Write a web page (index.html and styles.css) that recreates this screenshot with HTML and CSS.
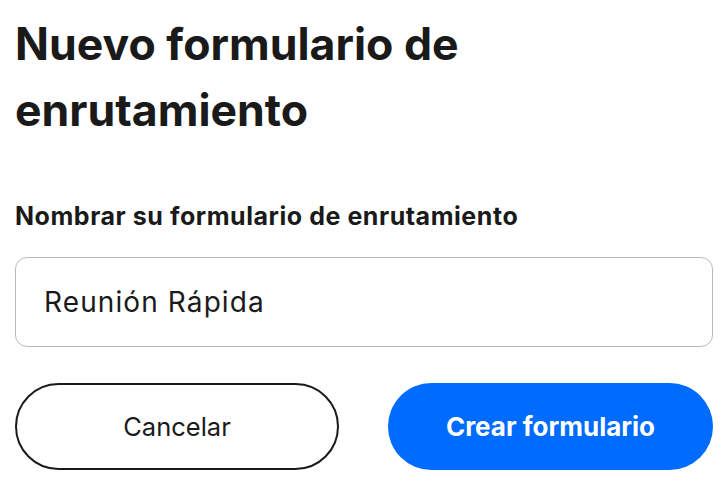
FILE: index.html
```html
<!DOCTYPE html>
<html lang="es">
<head>
<meta charset="utf-8">
<title>Nuevo formulario de enrutamiento</title>
<link rel="stylesheet" href="styles.css">
</head>
<body>
<main class="dialog">
  <h1 class="title">Nuevo formulario de enrutamiento</h1>
  <label class="field-label" for="name">Nombrar su formulario de enrutamiento</label>
  <div class="input-box" id="name">Reunión Rápida</div>
  <div class="actions">
    <button class="btn btn-secondary" type="button">Cancelar</button>
    <button class="btn btn-primary" type="button">Crear formulario</button>
  </div>
</main>
</body>
</html>
```
FILE: styles.css
```css
* { box-sizing: border-box; }
html, body { margin: 0; padding: 0; background: #ffffff; }
body {
  font-family: "Inter", "Open Sans", sans-serif;
  color: #1a1a1a;
  width: 728px;
  height: 484px;
  overflow: hidden;
}
.dialog {
  padding: 11px 15px 0 15px;
  display: flex;
  flex-direction: column;
}
.title {
  margin: 0;
  font-size: 44.6px;
  font-weight: 700;
  line-height: 66px;
  width: 520px;
}
.field-label {
  margin-top: 58px;
  font-size: 25px;
  font-weight: 700;
  line-height: 30px;
  letter-spacing: 0.55px;
}
.input-box {
  margin-top: 26px;
  height: 90px;
  border: 1.5px solid #b8b8b8;
  border-radius: 12px;
  padding: 0 28px;
  display: flex;
  align-items: center;
  font-size: 28px;
  letter-spacing: 1.1px;
  color: #1a1a1a;
}
.actions {
  margin-top: 36px;
  display: grid;
  grid-template-columns: 324px 325px;
  column-gap: 49px;
}
.btn {
  height: 87px;
  border-radius: 44px;
  font-family: "Inter", "Open Sans", sans-serif;
  cursor: pointer;
}
.btn-secondary {
  background: #ffffff;
  border: 2px solid #1a1a1a;
  color: #1a1a1a;
  font-size: 25.5px;
  font-weight: 400;
}
.btn-primary {
  background: #006bff;
  border: none;
  color: #ffffff;
  font-size: 26px;
  font-weight: 700;
}
```
